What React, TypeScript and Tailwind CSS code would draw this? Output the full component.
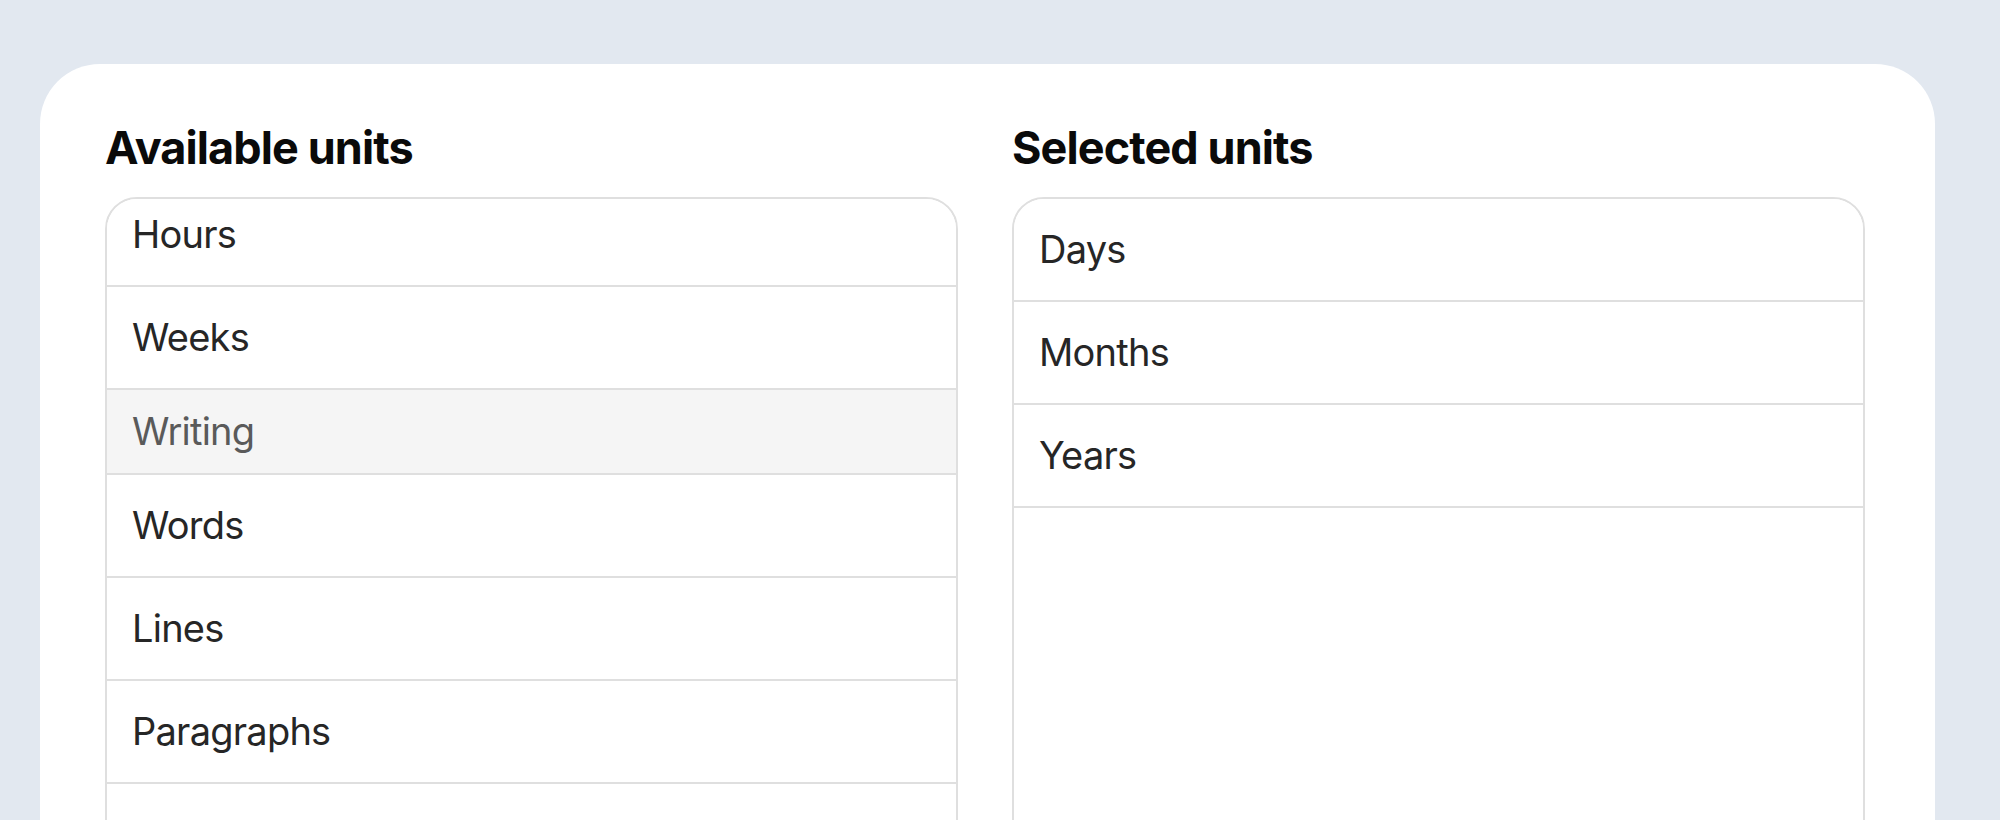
import React from "react";

type Row = { label: string; header?: boolean };

const available: Row[] = [
  { label: "Hours" },
  { label: "Weeks" },
  { label: "Writing", header: true },
  { label: "Words" },
  { label: "Lines" },
  { label: "Paragraphs" },
  { label: "" },
];

const selected: Row[] = [{ label: "Days" }, { label: "Months" }, { label: "Years" }];

function ListRow({ row }: { row: Row }) {
  if (row.header) {
    return (
      <div className="flex h-[85px] items-center border-b-2 border-[#dfdfdf] bg-[#f5f5f5] pl-[25px] text-[38px] tracking-[-0.02em] text-[#5a5a5a]">
        {row.label}
      </div>
    );
  }
  return (
    <div className="flex h-[103px] items-center border-b-2 border-[#dfdfdf] bg-white pl-[25px] text-[38px] tracking-[-0.02em] text-[#262626]">
      {row.label}
    </div>
  );
}

function Column({ title, rows, offset }: { title: string; rows: Row[]; offset?: boolean }) {
  return (
    <div className="flex flex-col">
      <h2 className="mb-[23px] text-[45px] font-bold leading-[53px] tracking-[-0.02em] text-[#0a0a0a]">{title}</h2>
      <div className="h-[720px] overflow-hidden rounded-[32px] border-2 border-[#dfdfdf] bg-white">
        <div className={offset ? "-mt-[15px] flex flex-col" : "flex flex-col"}>
          {rows.map((r, i) => (
            <ListRow key={i} row={r} />
          ))}
        </div>
      </div>
    </div>
  );
}

export default function App() {
  return (
    <div className="h-[820px] w-[2000px] overflow-hidden bg-[#e2e8f0] pl-[40px] pr-[65px] pt-[64px] font-['Inter',sans-serif]">
      <div className="grid h-[900px] grid-cols-2 items-start gap-x-[54px] rounded-[60px] bg-white pl-[65px] pr-[70px] pt-[57px]">
        <Column title="Available units" rows={available} offset />
        <Column title="Selected units" rows={selected} />
      </div>
    </div>
  );
}
